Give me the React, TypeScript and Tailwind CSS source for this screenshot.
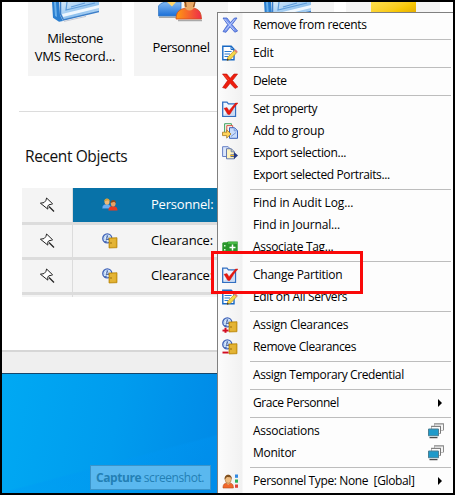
import React from "react";

type IconProps = { className?: string };

const Svg = ({ children, className = "" }: { children: React.ReactNode; className?: string }) => (
  <svg viewBox="0 0 16 16" className={`h-4 w-4 shrink-0 ${className}`} fill="none">
    {children}
  </svg>
);

const BlueCross = () => (
  <Svg>
    <path d="M1 1h4l3.4 4.6L12.5 1H15l-5 6.6L15.6 14l-2.8 1.2-4.7-5.4L4 15.3 1 14.6l4.7-7z" fill="#7b98ee" stroke="#3c60cc" strokeWidth=".8" />
    <path d="M2.5 2l9.5 11M12.7 2.4L3.4 13.2" stroke="#c3d2ff" strokeWidth=".9" />
  </Svg>
);
const RedCross = () => (
  <Svg>
    <path d="M.5 1h4.3l3.4 4.3L12 1h3.6l-5.1 6.6L15.8 14l-2.8 1.4-4.9-5.1L4 15.5.6 14.6l5-7z" fill="#ee1d0d" stroke="#c01008" strokeWidth=".6" />
    <path d="M2.5 2l4.5 5" stroke="#ff4a2a" />
  </Svg>
);

const EditIcon = () => (
  <Svg>
    <path d="M.8 1.2h8.4l2.8 3v10.6H.8z" fill="#fff" stroke="#1768c4" strokeWidth="1.4" />
    <path d="M9 1.2v3.3h3" stroke="#1768c4" />
    <path d="M2.5 6.5h7M2.5 9h5.5M2.5 11.5h3.5" stroke="#2a7ad0" strokeWidth="1.2" />
    <path d="M5 15.3l1-3.3 6.8-7 2.3 2.2-6.6 7z" fill="#f3d84a" stroke="#b68a28" strokeWidth=".7" />
    <path d="M12 5.6l1.5-1.4 2.2 2.2-1.5 1.5z" fill="#df8077" />
    <path d="M5 15.4l.5-1.8 1.4 1.3z" fill="#222" />
  </Svg>
);

const CheckIcon = () => (
  <Svg>
    <path d="M.7 1.2H5l1.4 1.7h7.1v12.4H.7z" fill="#eff5fd" stroke="#326fc1" strokeWidth="1.3" />
    <path d="M2 13.8L12.6 7v7.2H2z" fill="#c9dbf4" />
    <path d="M2 7.3l3-.8 2 3.2L13.5 2H16c-3.5 3.5-5.6 7.5-8.2 11.4H5.9z" fill="#e8190f" stroke="#c40c08" strokeWidth=".4" />
  </Svg>
);

const GroupIcon = () => (
  <Svg>
    <path d="M2.6 9V.7h6.8v5" fill="#effaef" stroke="#46a063" />
    <path d="M4.8 10V2.6h5.9V7" fill="#fff4f1" stroke="#d35445" />
    <path d="M7.5 4.7h5l3 3v7.6h-8z" fill="#c9dcfa" stroke="#3a62bb" />
    <path d="M12.2 4.8v3h3M9 13.5l5-4" stroke="#7797da" />
    <path d="M.5 9.2h4.2V6.8L9 11l-4.3 4.1v-2.5H.5z" fill="#ffd45a" stroke="#a47820" strokeWidth=".8" />
  </Svg>
);

const ExportIcon = () => (
  <Svg>
    <path d="M.6 1.7h5.6l1.4 1.6v8.2h-7z" fill="#dce7fb" stroke="#6680c5" />
    <path d="M4.5 3.7h4.8l3 3v7.1H4.5z" fill="#fff3bd" stroke="#6479ad" />
    <path d="M9.2 3.8v3h3" stroke="#6479ad" />
    <path d="M8.5 9.4H12V7l4 3.5-4 3.5v-2.3H8.5z" fill="#263a83" />
    <path d="M8 10.5h4" stroke="#edb52b" />
  </Svg>
);

const TagIcon = () => (
  <Svg>
    <path d="M.3 4l1.2-.8h3.3L6 2.5h9.7v11H5.8l-1-1H1.3L.3 12z" fill="#29962a" />
    <path d="M6 3h9.2v2H6z" fill="#48b946" />
    <path d="M7.5 8.5h6M10.5 5.5v6" stroke="#fff" strokeWidth="1.5" />
    <path d="M2 6h1.5v1.5H2zM2 10h1.5v1.4H2z" fill="#d8ffd3" />
  </Svg>
);

const ClearanceIcon = ({ mark }: { mark?: "plus" | "minus" }) => (
  <Svg>
    <circle cx="5.3" cy="5.4" r="4.5" fill="#eaf6ff" stroke="#3f62b8" strokeWidth="1.4" />
    <circle cx="5.3" cy="5.4" r="3" stroke="#9dc2eb" strokeWidth=".7" />
    <path d="M4 6.5l1.3-4 1.2 4zM2 9l3-1M5.5 6l3 1" stroke="#3554a1" strokeWidth=".8" />
    <path d="M7 5l8-.3v10L7 15z" fill="#d8a51c" stroke="#b4830b" strokeWidth=".7" />
    <path d="M8 6l5.8-.2v7.9L8 14z" fill="#e4b436" />
    <path d="M9 9v2" stroke="#9b710b" />
    {mark && <path d="M.5 12.6h6v1.9h-6z" fill="#d30d22" />}
    {mark === "plus" && <path d="M2.5 10.8h2v5h-2z" fill="#d30d22" />}
  </Svg>
);
const Assign = () => <ClearanceIcon mark="plus" />;
const Remove = () => <ClearanceIcon mark="minus" />;

const PeopleIcon = () => (
  <Svg>
    <path d="M.3 11.5C.3 8.5 1.5 7.3 4.7 7.3S9 9 9 11.5z" fill="#6aaef4" stroke="#3b7cc8" strokeWidth=".4" />
    <ellipse cx="5" cy="4.8" rx="2.5" ry="3" fill="#efb878" />
    <path d="M2.2 4.5C2.2 .5 7.8.5 7.7 4.5L6 3.2z" fill="#d5a03a" />
    <path d="M6.5 13.6c0-3.3 1.3-4.4 4.7-4.4 3 0 4.3 1.4 4.3 4.4z" fill="#e93a20" />
    <ellipse cx="11.2" cy="6.4" rx="2.4" ry="3" fill="#e8a264" />
    <path d="M8.5 5.9c0-4 5.8-4 5.5.3l-1.9-1.4z" fill="#86471d" />
  </Svg>
);

const TypeIcon = () => (
  <Svg>
    <path d="M1 15c0-4 1.5-5 5.2-5s5.2 1 5.2 5z" fill="#f1682b" stroke="#b64b19" strokeWidth=".6" />
    <path d="M4.6 9h3.2v1.6L6.2 12l-1.6-1.4z" fill="#e8b076" />
    <ellipse cx="6.2" cy="6.3" rx="3.1" ry="4" fill="#efbc80" stroke="#9e6830" strokeWidth=".5" />
    <path d="M2.6 6.5C1.8 0 10.6 0 9.8 6.5L8.7 4.2 5 4z" fill="#80501f" />
    <path d="M13 1.5h3v3.3h-3z" fill="#3189e2" />
    <path d="M13 6.5h3v3.2h-3z" fill="#2eb159" />
    <path d="M13 11.5h3v3.3h-3z" fill="#df4438" />
  </Svg>
);

const WindowsIcon = () => (
  <Svg>
    <path d="M6.5 1h9v6.5h-9z" fill="#f5f5f5" stroke="#bdbdbd" />
    <path d="M6 .8h10M15.5 1v6" stroke="#8b8b8b" />
    <path d="M3.5 3.5h9v7h-9z" fill="#fafafa" stroke="#b0b0b0" />
    <path d="M3 3.3h10M12.5 3.5v7" stroke="#777" />
    <path d="M.5 6h10v6.8H.5z" fill="#1e9aca" stroke="#4c7f93" />
    <path d="M1.5 14.7h8" stroke="#222" />
  </Svg>
);

const Arrow = () => (
  <svg viewBox="0 0 4 8" className="mr-[11px] h-2 w-1 shrink-0"><path d="M0 0l4 4-4 4z" fill="#000" /></svg>
);

const Pin = () => (
  <svg viewBox="0 0 16 16" className="h-4 w-4" fill="none">
    <path d="M7.6 1l6 5.8-1.4.5-2.4.5-1 1.3v3L1.4 6.2 5 5.6l1.8-1.9z" fill="#fff" stroke="#222" strokeWidth="1" />
    <path d="M10 9.5l5 5" stroke="#222" strokeWidth="1.2" />
  </svg>
);

type Item = { label: string; track: string; icon?: React.FC<IconProps>; end?: "arrow" | "windows" };

const groups: Item[][] = [
  [{ label: "Remove from recents", track: "tracking-[-0.35px]", icon: BlueCross }],
  [{ label: "Edit", track: "tracking-[-0.2px]", icon: EditIcon }],
  [{ label: "Delete", track: "tracking-[-0.45px]", icon: RedCross }],
  [
    { label: "Set property", track: "tracking-[-0.45px]", icon: CheckIcon },
    { label: "Add to group", track: "tracking-[-0.17px]", icon: GroupIcon },
    { label: "Export selection...", track: "tracking-[-0.32px]", icon: ExportIcon },
    { label: "Export selected Portraits...", track: "tracking-[-0.36px]" },
  ],
  [
    { label: "Find in Audit Log...", track: "tracking-[-0.12px]" },
    { label: "Find in Journal...", track: "tracking-[-0.15px]" },
    { label: "Associate Tag...", track: "tracking-[-0.29px]", icon: TagIcon },
  ],
  [
    { label: "Change Partition", track: "tracking-[-0.24px]", icon: CheckIcon },
    { label: "Edit on All Servers", track: "tracking-[-0.33px]", icon: EditIcon },
  ],
  [
    { label: "Assign Clearances", track: "tracking-[-0.3px]", icon: Assign },
    { label: "Remove Clearances", track: "tracking-[-0.38px]", icon: Remove },
  ],
  [{ label: "Assign Temporary Credential", track: "tracking-[-0.39px]" }],
  [{ label: "Grace Personnel", track: "tracking-[-0.43px]", end: "arrow" }],
  [
    { label: "Associations", track: "tracking-[-0.23px]", end: "windows" },
    { label: "Monitor", track: "tracking-[-0.26px]", end: "windows" },
  ],
  [{ label: "Personnel Type: None  [Global]", track: "tracking-[-0.38px]", icon: TypeIcon, end: "arrow" }],
];

const MenuRow = ({ item }: { item: Item }) => {
  const Icon = item.icon;
  return (
    <div className="flex h-[22px] items-center">
      <div className="w-[35px] shrink-0 pl-1">{Icon && <Icon />}</div>
      <span className={`flex-1 whitespace-pre text-[12px] leading-[22px] text-black ${item.track}`}>{item.label}</span>
      {item.end === "arrow" && <Arrow />}
      {item.end === "windows" && <div className="mr-[9px]"><WindowsIcon /></div>}
    </div>
  );
};

const Menu = () => (
  <div className="absolute left-[217px] top-3 h-[481px] w-[236px] overflow-hidden border-l border-t border-[#808080] bg-[linear-gradient(90deg,#fcfcfc_0px,#f1f1f1_24px,#fdfdfd_25px)] pt-px">
    {groups.map((group, i) => (
      <React.Fragment key={i}>
        {i > 0 && <div className="ml-8 mr-[2px] h-1.5 pt-[3px]"><div className="h-px bg-[#bdbdbd]" /></div>}
        {group.map((item) => <MenuRow key={item.label} item={item} />)}
      </React.Fragment>
    ))}
  </div>
);

const BooksArt = () => (
  <svg viewBox="0 0 48 20" className="h-5 w-12" fill="none">
    <defs>
      <linearGradient id="page" x2="1" y2="1"><stop stopColor="#d6eafb" /><stop offset=".55" stopColor="#8fc1ee" /><stop offset="1" stopColor="#dcedfb" /></linearGradient>
    </defs>
    <path d="M1 0h7l1 13 3 6-4 .8-6-4z" fill="#2b7fd0" />
    <path d="M3 0h2l1 15-2-1z" fill="#69b1ec" />
    <path d="M9 0h39v9L13 18l-4-5z" fill="url(#page)" />
    <path d="M11 12L48 3v3L12 15z" fill="#eff7fe" />
    <path d="M9.5 0v12l3 6L48 9.6" stroke="#3d7fc9" strokeWidth="1.5" />
    <path d="M16 0l-1 8 29-7M20 5l14-4" stroke="#5d9cdb" strokeWidth="1.2" />
    <path d="M13 19.4l22-5" stroke="#c3c9d6" />
  </svg>
);

const PersonnelArt = () => (
  <svg viewBox="0 0 48 20" className="h-5 w-12" fill="none">
    <defs>
      <linearGradient id="blue" x2="0" y2="1"><stop stopColor="#84baf2" /><stop offset="1" stopColor="#1a6fd8" /></linearGradient>
      <linearGradient id="orange" x2="1" y2="0"><stop stopColor="#ff9a10" /><stop offset="1" stopColor="#ee2c4a" /></linearGradient>
    </defs>
    <path d="M2 15.3h20M21 18.4h24" stroke="#a8a8a8" strokeWidth="1.5" />
    <path d="M1.5 14V4Q3 1 8 0h16v14z" fill="url(#blue)" stroke="#3b7cc4" strokeWidth=".8" />
    <path d="M10 0h9l-4 4.5z" fill="#ffd66d" />
    <path d="M19 17q0-8 6-10l4-1h7q7 1 8 7l.5 4z" fill="url(#orange)" stroke="#cf4d20" strokeWidth=".8" />
    <path d="M27 0h11v3.5q-1.5 5-5.5 5T27 3.5z" fill="#e9a866" />
    <path d="M27 0h1.5l.5 5M38 0l-1.5 5" stroke="#8a5023" strokeWidth="1.3" />
  </svg>
);

const Card = ({ children }: { children: React.ReactNode }) => (
  <div className="flex h-[74px] w-[94px] shrink-0 flex-col items-center bg-[#f4f4f4]">{children}</div>
);

const Recent = ({ label, selected }: { label: string; selected?: boolean }) => (
  <div className={`flex border-b-[3px] border-[#dcdcdc] bg-[#f4f4f4] ${selected ? "h-[37px]" : "h-[35px]"}`}>
    <div className="flex w-[51px] items-center justify-center border-r border-[#dcdcdc]"><Pin /></div>
    <div className={`flex flex-1 items-center ${selected ? "bg-[#0872a8] text-white" : "text-black"}`}>
      <div className="ml-[29px] w-[49px]">{selected ? <PeopleIcon /> : <ClearanceIcon />}</div>
      <span className={`whitespace-nowrap text-[13px] ${selected ? "tracking-[-0.2px]" : "tracking-[-0.15px]"}`}>{label}</span>
    </div>
  </div>
);

export default function App() {
  return (
    <div className="relative h-[495px] w-[455px] overflow-hidden bg-black p-[2px] font-['Open_Sans','Noto_Sans',sans-serif]">
      <div className="flex h-[491px] w-[451px] flex-col overflow-hidden bg-white">
        <div className="h-[348px] shrink-0">
          <div className="flex gap-3 pl-[26px]">
            <Card>
              <BooksArt />
              <div className="mt-[7px] text-center text-[13px] leading-[18px] text-black">
                <div className="tracking-[-0.42px]">Milestone</div>
                <div className="whitespace-nowrap tracking-[-0.17px]">VMS Record...</div>
              </div>
            </Card>
            <Card>
              <PersonnelArt />
              <div className="mt-4 text-[13px] leading-[18px] tracking-[-0.45px] text-black">Personnel</div>
            </Card>
            <Card><BooksArt /></Card>
            <Card><div className="h-5 w-[45px] bg-linear-to-br from-[#ffe04b] via-[#f8c806] to-[#d49700]" /></Card>
          </div>
          <div className="ml-[17px] mt-[35px] h-px bg-[#dcdcdc]" />
          <h2 className="ml-[23px] mt-8 h-6 text-[15.5px] font-normal leading-6 tracking-[-0.4px] text-[#111]">Recent Objects</h2>
          <div className="ml-5 mt-5">
            <Recent label="Personnel:" selected />
            <Recent label="Clearance:" />
            <Recent label="Clearance:" />
            <div className="h-[2px] bg-[#f4f4f4]"><div className="h-full w-[51px] border-r border-[#dcdcdc]" /></div>
          </div>
        </div>
        <div className="h-6 shrink-0 border-b border-t-2 border-b-[#15466b] border-t-[#d6d6d6] bg-[#efefef]" />
        <div className="flex flex-1 items-end bg-[linear-gradient(165deg,transparent_49%,#0097f455_50%,transparent_80%),linear-gradient(100deg,#00a9f3_0px,#009cee_120px,#008ce8_215px)] pb-[3px] pl-[88px]">
          <div className="flex h-[25px] w-[121px] items-center whitespace-pre border border-[#3a94ca] bg-[#5ab8ef] pl-[5px] text-[12px] tracking-[-0.43px] text-[#2380b5]">
            <b>Capture</b> screenshot.
          </div>
        </div>
      </div>
      <Menu />
      <div className="absolute left-[211px] top-[251px] h-[43px] w-[152px] border-[3px] border-[#fa0909]" />
    </div>
  );
}
